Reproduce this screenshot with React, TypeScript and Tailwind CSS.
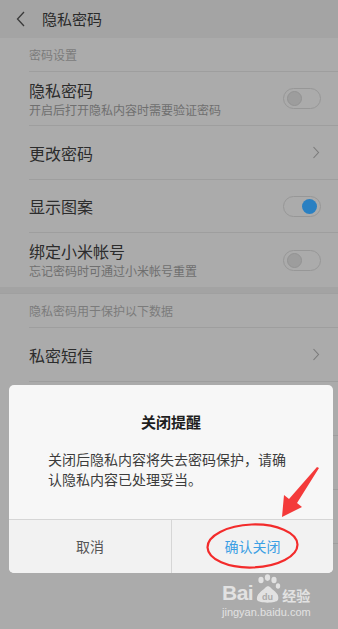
import React from "react";

const font = { fontFamily: '"Noto Sans CJK SC", "Noto Sans", sans-serif' };

function Toggle({ on }: { on?: boolean }) {
  return (
    <div className="relative w-[38px] h-[21px] rounded-full border border-[#979797] shrink-0">
      <div
        className={
          on
            ? "absolute top-[2px] right-[3px] w-[15px] h-[15px] rounded-full bg-[#2a80c2]"
            : "absolute top-[2px] left-[3px] w-[15px] h-[15px] rounded-full bg-[#9d9d9d] border border-[#939393]"
        }
      />
    </div>
  );
}

function Chevron() {
  return (
    <svg width="8" height="13" viewBox="0 0 8 13" className="shrink-0 mr-[1px]">
      <path d="M1.5 1 L6.5 6.5 L1.5 12" fill="none" stroke="#7a7a7a" strokeWidth="1.1" />
    </svg>
  );
}

function Row({
  title,
  sub,
  right,
  h = "h-[54px]",
}: {
  title: string;
  sub?: string;
  right?: React.ReactNode;
  h?: string;
}) {
  return (
    <div className={`ml-[29px] pr-[17px] ${h} border-b border-[#9e9e9e] flex items-center justify-between`}>
      <div className="flex flex-col">
        <span className="text-[16px] leading-[20px] text-[#2c2c2c]">{title}</span>
        {sub && <span className="text-[12px] leading-[17px] text-[#6f6f6f] mt-[1px]">{sub}</span>}
      </div>
      {right}
    </div>
  );
}

function Label({ text }: { text: string }) {
  return (
    <div className="ml-[29px] h-[34px] border-b border-[#9e9e9e] flex items-center">
      <span className="text-[12px] text-[#7b7b7b]">{text}</span>
    </div>
  );
}

export default function App() {
  return (
    <div className="relative w-[338px] h-[629px] overflow-hidden bg-[#ababab]" style={font}>
      {/* Header */}
      <div className="h-[38px] bg-[#a4a4a4] flex items-center">
        <svg width="10" height="16" viewBox="0 0 10 16" className="ml-[16px]">
          <path d="M8 1 L1.5 8 L8 15" fill="none" stroke="#3a3a3a" strokeWidth="1.3" />
        </svg>
        <span className="ml-[16px] text-[15px] text-[#2a2a2a]">隐私密码</span>
      </div>

      {/* List */}
      <Label text="密码设置" />
      <Row title="隐私密码" sub="开启后打开隐私内容时需要验证密码" right={<Toggle />} />
      <Row title="更改密码" right={<Chevron />} />
      <Row title="显示图案" right={<Toggle on />} h="h-[53px]" />
      <Row title="绑定小米帐号" sub="忘记密码时可通过小米帐号重置" right={<Toggle />} h="h-[54px] border-b-0" />
      <div className="h-[7px] bg-[#a3a3a3] border-b border-[#a0a0a0]" />
      <Label text="隐私密码用于保护以下数据" />
      <Row title="私密短信" right={<Chevron />} />
      <Row title="私密联系人" right={<Chevron />} />
      <Row title="私密相册" right={<Chevron />} />
      <Row title="应用锁" right={<Chevron />} />

      {/* Dialog */}
      <div className="absolute left-[9px] top-[385px] w-[324px] h-[188px] rounded-[5px] bg-[#f7f7f7] overflow-hidden flex flex-col">
        <div className="pt-[27px] text-center text-[15px] leading-[20px] font-bold text-[#1e1e1e]">关闭提醒</div>
        <div className="px-[39px] mt-[17px] text-[14px] leading-[20px] text-[#3c3c3c]">
          <div>关闭后隐私内容将失去密码保护，请确</div>
          <div>认隐私内容已处理妥当。</div>
        </div>
        <div className="mt-auto h-[54px] grid grid-cols-2 border-t border-[#d6d6d6] bg-[#f2f2f2]">
          <div className="flex items-center justify-center text-[14px] text-[#555555]">取消</div>
          <div className="flex items-center justify-center text-[14px] text-[#3c9fe4] border-l border-[#d6d6d6]">确认关闭</div>
        </div>
      </div>

      {/* Red annotation */}
      <svg className="absolute left-0 top-0" width="338" height="629" viewBox="0 0 338 629">
        <ellipse cx="252.5" cy="546" rx="45" ry="21.5" fill="none" stroke="#f32b2b" strokeWidth="2.2" transform="rotate(-2 252.5 546)" />
        <path d="M319 468 L297 503 L302 507 L282 517 L284 495 L289 499 L317 467 Z" fill="#f43a3a" />
      </svg>

      {/* Watermark */}
      <div className="absolute left-[222px] top-[574px] flex flex-col text-[#e2e2e2]">
        <div className="flex items-end h-[30px]">
          <span className="text-[21px] leading-[22px] font-bold tracking-[-0.5px]" style={{ fontFamily: '"Liberation Sans", Arial, sans-serif' }}>
            Bai
          </span>
          <svg width="27" height="30" viewBox="0 0 27 30" className="ml-[1px]">
            <ellipse cx="7" cy="6" rx="2.6" ry="3.3" fill="#e2e2e2" />
            <ellipse cx="13.5" cy="3.6" rx="2.6" ry="3.3" fill="#e2e2e2" />
            <ellipse cx="20" cy="6" rx="2.6" ry="3.3" fill="#e2e2e2" />
            <ellipse cx="24" cy="12" rx="2.2" ry="2.8" fill="#e2e2e2" />
            <path d="M3 26 C2 20 8 17 11 14 C13 11.5 15 11.5 17 14 C20 17 26 20 24 26 C22 29.5 5 29.5 3 26 Z" fill="#e2e2e2" />
            <text x="13.5" y="26" textAnchor="middle" fontSize="9" fontWeight="bold" fill="#ababab" style={{ fontFamily: '"Liberation Sans", Arial, sans-serif' }}>
              du
            </text>
          </svg>
          <span className="text-[14px] leading-[18px] ml-[1px] font-bold">经验</span>
        </div>
        <span className="text-[11px] leading-[13px] mt-[2px]" style={{ fontFamily: '"Liberation Sans", Arial, sans-serif' }}>
          jingyan.baidu.com
        </span>
      </div>
    </div>
  );
}
